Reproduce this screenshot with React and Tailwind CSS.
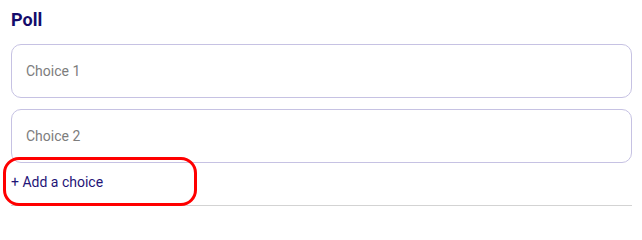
import React from 'react';

// poll editor: two choice inputs + add link
export default function App() {
  const choices = ['Choice 1', 'Choice 2'];

  return (
    <div className="w-[642px] h-[217px] bg-white pl-[11px] pr-[10px] pt-2 font-['Roboto',sans-serif]">
      <h2 className="text-[18px] leading-6 font-bold text-[#140c6b]">Poll</h2>

      <div className="mt-3 flex flex-col gap-[11px]">
        {choices.map((c) => (
          <input
            key={c}
            type="text"
            placeholder={c}
            className="h-[54px] w-full rounded-[10px] border border-[#c6c2e3] px-[14px] text-[14px] text-gray-800 placeholder:text-[#7d7d7d] outline-none"
          />
        ))}
      </div>

      <div className="relative border-b border-[#d3d3d3] pt-[9px] pb-[13px]">
        <button className="block text-[14px] leading-5 text-[#1f1577]">+ Add a choice</button>
        {/* highlight annotation */}
        <div className="absolute left-[-8px] top-[-6px] w-[194px] h-[49px] rounded-[16px] border-[3.5px] border-[#ff0000] pointer-events-none" />
      </div>
    </div>
  );
}
